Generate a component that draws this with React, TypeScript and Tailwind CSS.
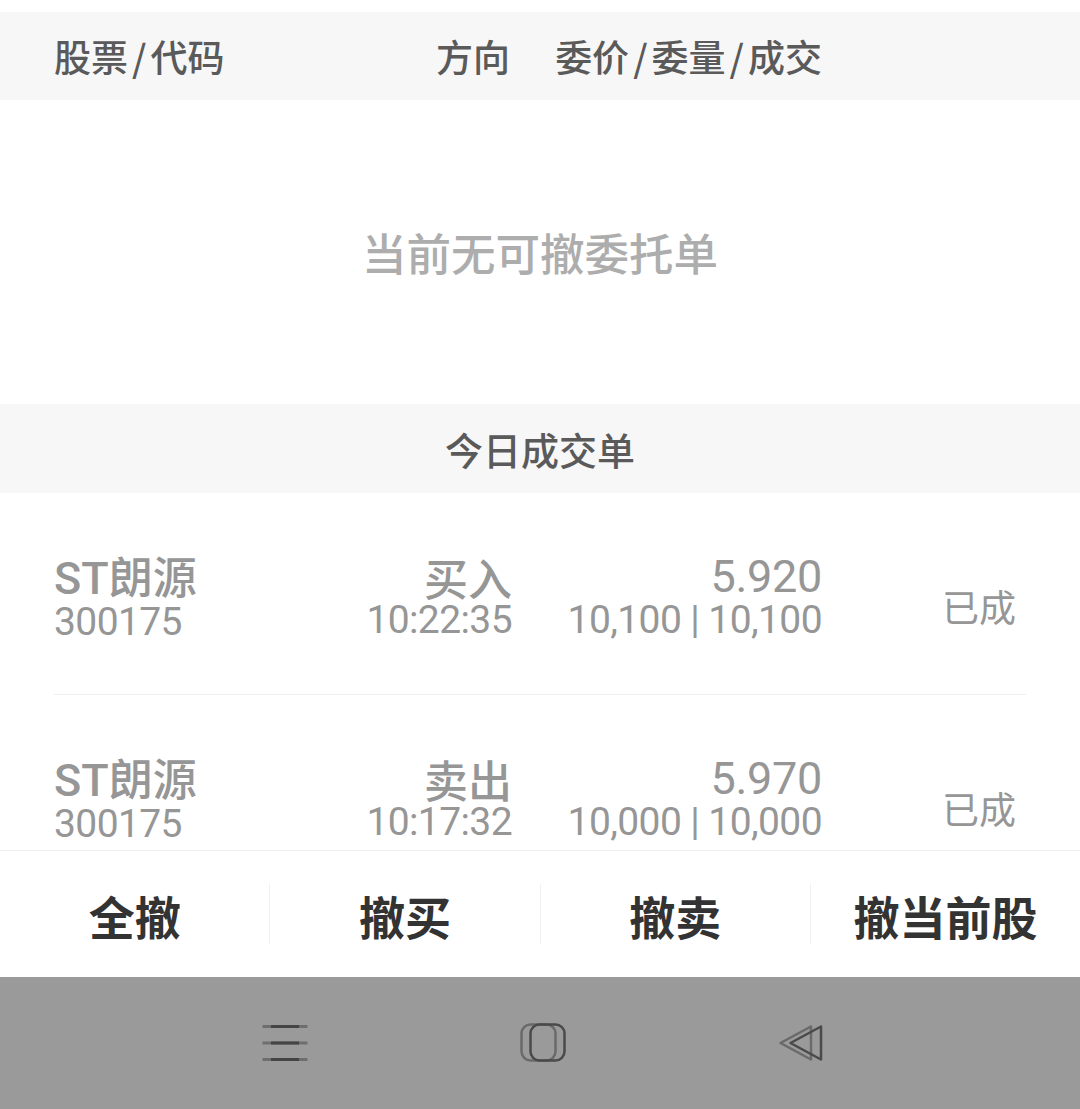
import React from "react";

const CJK = '"Noto Sans CJK SC", "Noto Sans", sans-serif';
const NUM = 'Roboto, "Noto Sans CJK SC", sans-serif';

type Trade = {
  name: string;
  code: string;
  dir: string;
  time: string;
  price: string;
  qty: string;
  status: string;
};

const trades: Trade[] = [
  { name: "朗源", code: "300175", dir: "买入", time: "10:22:35", price: "5.920", qty: "10,100 | 10,100", status: "已成" },
  { name: "朗源", code: "300175", dir: "卖出", time: "10:17:32", price: "5.970", qty: "10,000 | 10,000", status: "已成" },
];

function Row({ t }: { t: Trade }) {
  return (
    <div className="mx-[54px] h-[202px] shrink-0 border-b border-[#eeeeee] flex items-center pt-[9px] text-[#969696]">
      <div className="w-[196px] flex flex-col gap-[5px]">
        <div className="text-[44px] leading-[38px] whitespace-nowrap font-medium">
          <span style={{ fontFamily: NUM }} className="text-[45px]">ST</span>
          <span>{t.name}</span>
        </div>
        <div style={{ fontFamily: NUM }} className="text-[39px] leading-[38px] tracking-[-0.6px]">
          {t.code}
        </div>
      </div>
      <div className="w-[262px] flex flex-col items-end gap-[5px]">
        <div className="text-[44px] leading-[38px] font-medium">{t.dir}</div>
        <div style={{ fontFamily: NUM }} className="text-[39px] leading-[38px] tracking-[-0.6px] whitespace-nowrap">
          {t.time}
        </div>
      </div>
      <div className="w-[310px] flex flex-col items-end gap-[5px]">
        <div style={{ fontFamily: NUM }} className="text-[45px] leading-[38px] tracking-[-0.3px]">
          {t.price}
        </div>
        <div style={{ fontFamily: NUM }} className="text-[39px] leading-[38px] tracking-[-0.6px] whitespace-nowrap">
          {t.qty}
        </div>
      </div>
      <div className="flex-1 flex justify-end pr-[10px] mt-[15px]">
        <div className="text-[37px] leading-[40px]">{t.status}</div>
      </div>
    </div>
  );
}

function Hamburger() {
  return (
    <svg width="46" height="38" viewBox="0 0 46 38" fill="none">
      {[2.5, 19, 35.5].map((y) => (
        <g key={y}>
          <line x1="0.5" y1={y} x2="45.5" y2={y} stroke="#6e6e6e" strokeWidth="3" />
          <line x1="9" y1={y} x2="37" y2={y} stroke="#444444" strokeWidth="3" />
        </g>
      ))}
    </svg>
  );
}

function Home() {
  return (
    <svg width="46" height="40" viewBox="0 0 46 40" fill="none">
      <rect x="1.5" y="1.5" width="34" height="36" rx="9" stroke="#5e5e5e" strokeWidth="2.5" opacity="0.8" />
      <rect x="10.5" y="1.5" width="34" height="36" rx="9" stroke="#4a4a4a" strokeWidth="2.5" />
    </svg>
  );
}

function Back() {
  return (
    <svg width="46" height="38" viewBox="0 0 46 38" fill="none">
      <path d="M33 2.5 L2.5 19 L33 35.5 Z" stroke="#5e5e5e" strokeWidth="2.5" strokeLinejoin="round" opacity="0.8" />
      <path d="M43 2.5 L12.5 19 L43 35.5 Z" stroke="#4a4a4a" strokeWidth="2.5" strokeLinejoin="round" />
    </svg>
  );
}

function Slash() {
  return <span className="mx-[4px]">/</span>;
}

export default function App() {
  const buttons = ["全撤", "撤买", "撤卖", "撤当前股"];
  return (
    <div className="w-[1080px] h-[1109px] bg-white flex flex-col overflow-hidden" style={{ fontFamily: CJK }}>
      <div className="h-[12px] shrink-0 bg-white" />
      {/* header */}
      <div className="h-[88px] shrink-0 bg-[#f7f7f7] flex items-center px-[54px] text-[#5a5a5a] text-[37px] leading-[44px] font-medium">
        <div className="w-[196px] whitespace-nowrap">
          股票<Slash />代码
        </div>
        <div className="w-[260px] text-right">方向</div>
        <div className="w-[312px] text-right whitespace-nowrap">
          委价<Slash />委量<Slash />成交
        </div>
        <div className="flex-1" />
      </div>
      {/* empty */}
      <div className="h-[304px] shrink-0 flex items-center justify-center">
        <div className="text-[44.5px] leading-[50px] text-[#adadad] font-medium">当前无可撤委托单</div>
      </div>
      {/* section title */}
      <div className="h-[89px] shrink-0 bg-[#f7f7f7] flex items-center justify-center">
        <div className="text-[38px] leading-[44px] text-[#5a5a5a] font-medium">今日成交单</div>
      </div>
      {/* list */}
      <div className="flex-1 overflow-hidden flex flex-col">
        {trades.map((t, i) => (
          <Row key={i} t={t} />
        ))}
      </div>
      {/* action bar */}
      <div className="h-[127px] shrink-0 border-t border-[#eeeeee] bg-white flex items-center">
        {buttons.map((b, i) => (
          <React.Fragment key={b}>
            {i > 0 && <div className="w-px h-[60px] bg-[#f0f0f0]" />}
            <div className="flex-1 flex items-center justify-center text-[46px] leading-[50px] font-bold text-[#333333] pt-[2px]">
              {b}
            </div>
          </React.Fragment>
        ))}
      </div>
      {/* nav bar */}
      <div className="h-[132px] shrink-0 bg-[#9a9a9a] flex items-center justify-center gap-[212px] pl-[6px]">
        <Hamburger />
        <Home />
        <Back />
      </div>
    </div>
  );
}
